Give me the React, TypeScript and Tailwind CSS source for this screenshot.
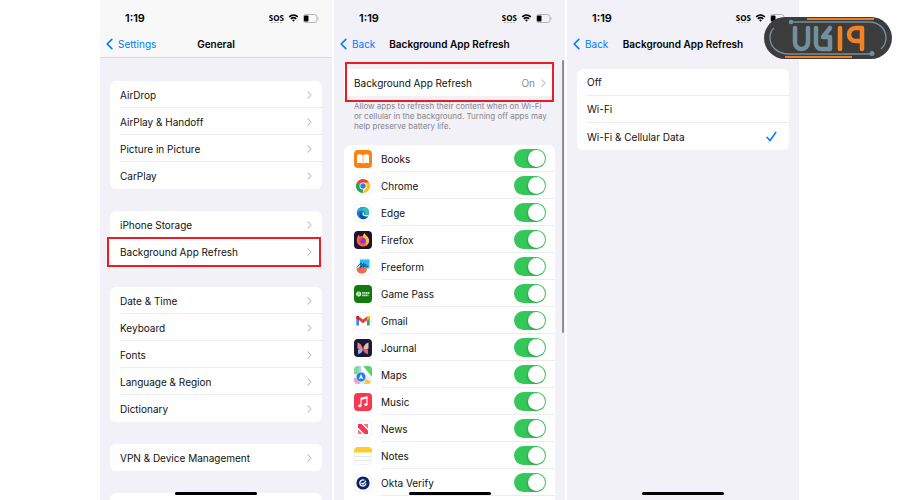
import type { ReactNode } from "react";

function Chevron({ className }: { className: string }) {
  return (
    <svg viewBox="0 0 6 10" className={className} fill="none" stroke="currentColor" strokeLinecap="round" strokeLinejoin="round" aria-hidden="true">
      <path d="M1 1l4 4-4 4" />
    </svg>
  );
}

function StatusBar() {
  return (
    <div className="flex h-9 shrink-0 items-center pl-[25px] pr-[13px]">
      <span className="text-[11px] font-semibold leading-4">1:19</span>
      <div className="ml-auto flex items-center gap-1">
        <div className="flex flex-col items-center">
          <span className="text-[8px] font-bold leading-[9px] font-['Open_Sans',sans-serif]">SOS</span>
          <svg viewBox="0 0 13 2" className="h-[2px] w-[13px]" fill="#b5b5b8" aria-hidden="true">
            <rect x="1" width="2" height="1" />
            <rect x="4" width="2" height="1" />
            <rect x="7" width="2" height="1" />
            <rect x="10" width="2" height="1" />
          </svg>
        </div>
        <svg viewBox="0 0 12 9" className="h-[8px] w-[11px]" fill="none" stroke="#000" strokeWidth="1.9" aria-hidden="true">
          <path d="M1.2 3.3C4 .7 8 .7 10.8 3.3" />
          <path d="M3 5.4c1.8-1.6 4.2-1.6 6 0" />
          <path d="M4.4 6.8L6 8.6l1.6-1.8c-1-.8-2.200-.8-3.200 0z" fill="#000" stroke="none" />
        </svg>
        <svg viewBox="0 0 16 9" className="h-[9px] w-4" fill="none" aria-hidden="true">
          <rect x=".5" y=".5" width="13.500" height="8" rx="2.300" stroke="#b4b4b8" />
          <rect x="1" y="1.500" width="4.500" height="6" rx="1" fill="#000" />
          <path d="M14.800 3v3c1-.5 1-2.500 0-3z" fill="#a9a9ad" />
        </svg>
      </div>
    </div>
  );
}

function NavBar({ back, title }: { back: string; title: string }) {
  return (
    <div className="grid h-4 shrink-0 grid-cols-[1fr_auto_1fr] items-center px-[6px] text-[10px] leading-4">
      <button type="button" className="flex items-center gap-[5px] text-[#007aff]">
        <Chevron className="h-3 w-[7px] rotate-180 stroke-[1.400]" />
        {back}
      </button>
      <h1 className="whitespace-nowrap font-semibold">{title}</h1>
    </div>
  );
}

function Phone({ children }: { children: ReactNode }) {
  return (
    <section className="relative flex min-w-0 flex-col overflow-hidden bg-[#f2f1f7]">
      {children}
      <div className="absolute inset-x-0 bottom-[5px] mx-auto h-[3px] w-[82px] rounded-full bg-black" />
    </section>
  );
}

function Card({ children }: { children: ReactNode }) {
  return <ul className="rounded-[6px] bg-white">{children}</ul>;
}

const divider = "border-b border-[#ececef]";

function LinkRow({ label, last, marked }: { label: string; last: boolean; marked?: boolean }) {
  return (
    <li className="relative pl-[10px]">
      <button type="button" className={`flex h-[27px] w-full items-center justify-between pt-px pr-[10px] text-left ${last ? "" : divider}`}>
        {label}
        <Chevron className="h-2 w-[5px] stroke-[1.300] text-[#bcbcc0]" />
      </button>
      {marked && <div className="pointer-events-none absolute -top-[1px] -bottom-[2px] -left-[3px] right-[1px] border-2 border-[#ed1c24]" />}
    </li>
  );
}

const groups = [
  ["AirDrop", "AirPlay & Handoff", "Picture in Picture", "CarPlay"],
  ["iPhone Storage", "Background App Refresh"],
  ["Date & Time", "Keyboard", "Fonts", "Language & Region", "Dictionary"],
  ["VPN & Device Management"],
];

const frame = <rect x=".5" y=".5" width="17" height="17" rx="4" fill="#fff" stroke="#f1f1f3" />;

const apps: { name: string; icon: ReactNode }[] = [
  {
    name: "Books",
    icon: (
      <>
        <rect width="18" height="18" rx="4" fill="#fb8112" />
        <path d="M3 5c2-1 4-1 5.700.2V13.500C7 12.600 5 12.600 3 13.300zM15 5c-2-1-4-1-5.700.2V13.500c1.700-.9 3.700-.9 5.700-.2z" fill="#fff" />
      </>
    ),
  },
  {
    name: "Chrome",
    icon: (
      <>
        {frame}
        <path d="M9 9L2.900 5.500A7 7 0 0 1 15.100 5.500z" fill="#ea4335" />
        <path d="M9 9L2.900 5.500A7 7 0 0 0 9 16z" fill="#23a455" />
        <path d="M9 9h3l-3 7A7 7 0 0 0 15.100 5.500H9z" fill="#fbc116" />
        <path d="M2.900 5.500L6 10.800l3 .2 1-2z" fill="#23a455" />
        <circle cx="9" cy="9" r="3.500" fill="#fff" />
        <circle cx="9" cy="9" r="2.700" fill="#2f7bea" />
      </>
    ),
  },
  {
    name: "Edge",
    icon: (
      <>
        {frame}
        <circle cx="9" cy="9" r="6.200" fill="#1377c9" />
        <path d="M2.900 8.500C3.500 1 14.600 1.200 15.200 8c0 2.300-2 3.300-5 2.800 1.200-1.300.8-3.800-1.800-4C5.500 6.600 3.600 7.200 2.900 8.500z" fill="#36bfae" />
        <path d="M2.900 8.500C4 3.800 8 2.200 11 3.400 8 4 8.600 6.600 8.400 6.800 5.500 6.600 3.600 7.200 2.900 8.500z" fill="#28a7dc" />
        <path d="M7.600 8c-1.500 3 1.500 5.500 6.300 4.300-1.300 2.200-3.400 3-5.300 2.900-3.100-1.600-3.500-5.400-1-7.200z" fill="#0e4f9e" />
        <path d="M9.200 8c1 1 .5 2 .9 2.700 1.700 1 3.800.7 5-.6-.3 1-.7 1.700-1.200 2.200-4 .8-6.600-1.600-4.700-4.300z" fill="#fff" />
      </>
    ),
  },
  {
    name: "Firefox",
    icon: (
      <>
        <rect width="18" height="18" rx="4" fill="#1f1238" />
        <path d="M3.600 5.500l.7-2 1.500 2C7 4.800 8 4.800 9 5c0-1.200.6-2.200 1.500-2.800.5 2 4.500 3.300 4.500 7.300 0 3.600-2.700 6-6 6s-6.200-2.500-6.200-6c0-1.600.2-3 .8-4z" fill="#ff6a2b" />
        <path d="M10.500 2.200c.5 2 4.500 3.300 4.500 7.300 0 2.500-1.300 4.300-3.200 5.300C13 12 13 8 9.300 6.500 9 4.500 9.600 3 10.500 2.200z" fill="#ffc72c" />
        <circle cx="8.800" cy="9.700" r="2.900" fill="#8338d8" />
        <path d="M4.600 8c1.500-1 3-.4 4.200.3-1 1-2.300.8-2.600 2C6 12.600 9 13.500 11.300 11.500 10 15 4.700 14 4.600 8z" fill="#ff4056" />
      </>
    ),
  },
  {
    name: "Freeform",
    icon: (
      <>
        {frame}
        <rect x="6" y="1.500" width="9.500" height="9" fill="#21c0ee" />
        <path d="M2.500 10.500c2-1.500 9-1.500 10.500 0 0 3-2.300 5-5.300 5s-5.200-2-5.200-5z" fill="#f2694b" />
        <path d="M3 9.500C5 7 7 4 7.300 5c.4 1.200-2.300 5.200-1.300 5.200S9 5 9.800 5.300c.7.400-1.400 4-.6 4.200s1.800-3.700 2.600-3.300c.6.500-.3 2.500.4 2.800.6.100 1-.5 1.800-1" fill="none" stroke="#16457c" strokeWidth="1" />
      </>
    ),
  },
  {
    name: "Game Pass",
    icon: (
      <>
        <rect width="18" height="18" rx="4" fill="#107c10" />
        <circle cx="4.700" cy="9" r="2.500" fill="#fff" />
        <path d="M3.200 10.700L4.700 8.500l1.500 2.200M3.500 7.200l1.200.8 1.200-.8" stroke="#107c10" strokeWidth=".6" fill="none" />
        <path d="M8.200 7.800h7.400M8.200 10.400h6.200" stroke="#d8ead8" strokeWidth="1.800" strokeDasharray="1.500 .4" />
      </>
    ),
  },
  {
    name: "Gmail",
    icon: (
      <>
        {frame}
        <path d="M2.300 5.500v8h2.700V7.500z" fill="#4285f4" />
        <path d="M15.700 5.500v8H13V7.500z" fill="#34a853" />
        <path d="M2.300 5.300C2.300 4 4 3.700 5 4.500l4 3 4-3c1-.8 2.700-.5 2.700.8v1L9 11.300 2.300 6.300z" fill="#ea4335" />
        <path d="M13 4.500c1-.8 2.700-.5 2.700.8v1.200L13 8.500z" fill="#fbbc04" />
        <path d="M2.300 5.300C2.300 4 4 3.700 5 4.500v4L2.300 6.500z" fill="#c5221f" />
      </>
    ),
  },
  {
    name: "Journal",
    icon: (
      <>
        <rect width="18" height="18" rx="4" fill="#191a38" />
        <path d="M8.800 9.500C8 6 6 4 3.500 3.500v6c1 .3 2 .8 2.700 1.300z" fill="#ee7f7b" />
        <path d="M8.800 9.500L4 10.500v4.500c2.500-.2 4.200-1.500 4.800-4z" fill="#8fb4ea" />
        <path d="M9.200 9.500C10 6 12 4 14.500 3.500v6c-1 .3-2 .8-2.700 1.300z" fill="#f3b9a4" />
        <path d="M9.200 9.500L14 10.500v4.500c-2.500-.2-4.200-1.500-4.800-4z" fill="#d5627f" />
      </>
    ),
  },
  {
    name: "Maps",
    icon: (
      <>
        <rect width="18" height="18" rx="4" fill="#e9edf0" />
        <path d="M4 0h3v8H0V4a4 4 0 0 1 4-4z" fill="#7fdc8c" />
        <path d="M9 0h5a4 4 0 0 1 4 4v8z" fill="#55d46c" />
        <path d="M7 0h2l9 11v3L6 2z" fill="#fff" />
        <path d="M10 18l2-5 5 3a4 4 0 0 1-3 2z" fill="#fcc62f" />
        <path d="M0 12h4l2 6H4a4 4 0 0 1-4-4z" fill="#ee9fc4" />
        <path d="M4.500 0H7v6H4.500z" fill="#a9cdf5" />
        <circle cx="7" cy="11" r="4.900" fill="#1d7df2" stroke="#fff" strokeWidth=".6" />
        <path d="M7 8l2.300 5.300L7 12.300l-2.300 1z" fill="#fff" />
      </>
    ),
  },
  {
    name: "Music",
    icon: (
      <>
        <rect width="18" height="18" rx="4" fill="#fa3650" />
        <path d="M7 12.700V5.300l6-1.400v7.500" fill="none" stroke="#fff" strokeWidth="1.100" />
        <path d="M7 5l6-1.400v1.900L7 6.900z" fill="#fff" />
        <ellipse cx="5.800" cy="12.900" rx="1.700" ry="1.400" fill="#fff" />
        <ellipse cx="11.800" cy="11.600" rx="1.700" ry="1.400" fill="#fff" />
      </>
    ),
  },
  {
    name: "News",
    icon: (
      <>
        {frame}
        <path d="M4 4h3.500L14 10.500V14h-3.500L4 7.500z" fill="#fa3552" />
        <path d="M9.500 4H14v4.500zM4 9.500L8.500 14H4z" fill="#fb7186" />
      </>
    ),
  },
  {
    name: "Notes",
    icon: (
      <>
        {frame}
        <path d="M0 5.500V4a4 4 0 0 1 4-4h10a4 4 0 0 1 4 4v1.500z" fill="#fccd2c" />
        <path d="M1 9.500h16M1 13.500h16" stroke="#e0e0e2" strokeWidth=".8" />
      </>
    ),
  },
  {
    name: "Okta Verify",
    icon: (
      <>
        {frame}
        <circle cx="9" cy="9" r="6.600" fill="#0b2268" />
        <path d="M12 9.300a3.100 3.100 0 1 1-1.500-3" fill="none" stroke="#fff" strokeWidth="1.300" />
        <path d="M7.500 8.800l1.500 1.400 3-3.400" fill="none" stroke="#fff" strokeWidth="1.200" />
      </>
    ),
  },
];

function Toggle({ id }: { id: string }) {
  return (
    <span className="relative flex h-[19px] w-8 shrink-0">
      <input id={id} type="checkbox" role="switch" defaultChecked className="peer h-[19px] w-8 appearance-none rounded-full bg-[#34c759]" />
      <span className="pointer-events-none absolute top-[1px] right-[1px] h-[17px] w-[17px] rounded-full bg-white shadow-[-1px_1px_2px_rgba(0,0,0,0.18)]" />
    </span>
  );
}

function Logo() {
  return (
    <svg viewBox="0 0 128 42" className="absolute top-[17px] right-[8px] h-[42px] w-32" fill="none" role="img" aria-label="UR19">
      <rect width="128" height="42" rx="21" fill="#3c3c3d" />
      <path d="M43 2h67M21 40h67" stroke="#f07d22" strokeWidth="2" />
      <g stroke="#71909c" strokeWidth="1.400">
        <path d="M27 5h78c10 0 17 7 17 16 0 4-1.500 8-5 11" />
        <path d="M108 37H25C14 37 6 30 6 21c0-4 1.500-8 4-10" />
      </g>
      <circle cx="27" cy="5" r="2.300" fill="#71909c" />
      <circle cx="108" cy="36.500" r="2.500" fill="#71909c" />
      <g stroke="#71909c" strokeWidth="4.500" strokeLinecap="round" strokeLinejoin="round">
        <path d="M31 11v14.500a6.500 6.500 0 0 0 13 0V11" />
        <path d="M52 11v15.500a5.500 5.500 0 0 0 5.500 5.500H66V20h-7l7-9" />
      </g>
      <g stroke="#f58220" strokeWidth="4.500" strokeLinecap="round" strokeLinejoin="round">
        <path d="M76 11v21" />
        <path d="M98 32V11h-6.500a6.500 6.500 0 0 0 0 13H98" />
      </g>
    </svg>
  );
}

export default function App() {
  return (
    <main className="relative grid h-screen grid-cols-[232fr_231fr_232fr] gap-x-0.5 overflow-hidden bg-white pl-[100px] pr-[101px] font-['Inter','Liberation_Sans',sans-serif] text-[10px] leading-4 text-[#111]">
      <Phone>
        <header className="h-[58px] shrink-0 border-b border-[#dcdce0] bg-[#f8f8f9] text-black">
          <StatusBar />
          <NavBar back="Settings" title="General" />
        </header>
        <div className="flex flex-col gap-[22px] px-[10px] pt-[23px]">
          {groups.map((group) => (
            <Card key={group[0]}>
              {group.map((label, i) => (
                <LinkRow key={label} label={label} last={i === group.length - 1} marked={label === "Background App Refresh"} />
              ))}
            </Card>
          ))}
          <div className="h-[27px] rounded-[6px] bg-white" />
        </div>
      </Phone>

      <Phone>
        <header className="shrink-0 text-black">
          <StatusBar />
          <NavBar back="Back" title="Background App Refresh" />
        </header>
        <div className="px-[10px] pt-[17px]">
          <div className="relative bg-white">
            <button type="button" className="flex h-[27px] w-full items-center pl-[10px] pr-[9px] text-left">
              Background App Refresh
              <span className="ml-auto mr-[6px] text-[#8a8a8e]">On</span>
              <Chevron className="h-2 w-[5px] stroke-[1.300] text-[#bcbcc0]" />
            </button>
            <div className="pointer-events-none absolute -top-[7px] -bottom-[6px] left-[1px] right-[1px] border-2 border-[#ed1c24]" />
          </div>
          <p className="whitespace-nowrap pt-[5px] pl-[10px] text-[8px] leading-[10px] text-[#86868b]">
            Allow apps to refresh their content when on Wi-Fi
            <br />
            or cellular in the background. Turning off apps may
            <br />
            help preserve battery life.
          </p>
          <div className="pt-[14px]">
            <Card>
              {apps.map(({ name, icon }) => (
                <li key={name} className="flex h-[27px] items-center gap-[9px] pl-[10px]">
                  <svg viewBox="0 0 18 18" className="h-[18px] w-[18px] shrink-0" aria-hidden="true">
                    {icon}
                  </svg>
                  <div className={`flex h-[27px] grow items-center justify-between pt-px pr-[9px] ${divider}`}>
                    <label htmlFor={name}>{name}</label>
                    <Toggle id={name} />
                  </div>
                </li>
              ))}
              <li className="h-[27px]" />
            </Card>
          </div>
        </div>
        <div className="absolute top-[60px] right-[1px] h-[273px] w-[2px] rounded-full bg-[#8e8e92]" />
      </Phone>

      <Phone>
        <header className="shrink-0 text-black">
          <StatusBar />
          <NavBar back="Back" title="Background App Refresh" />
        </header>
        <div className="px-[10px] pt-[17px]">
          <Card>
            {["Off", "Wi-Fi", "Wi-Fi & Cellular Data"].map((label, i) => (
              <li key={label} className="pl-[10px]">
                <label className={`relative flex h-[27px] items-center justify-between pr-3 ${i < 2 ? divider : ""}`}>
                  {label}
                  <input type="radio" name="refresh" defaultChecked={i === 2} className="peer sr-only" />
                  <svg viewBox="0 0 11 11" className="hidden h-[11px] w-[11px] peer-checked:block" fill="none" stroke="#007aff" strokeWidth="1.500" strokeLinecap="round" strokeLinejoin="round" aria-hidden="true">
                    <path d="M1 6.200l3 3.500L9.800 1.300" />
                  </svg>
                </label>
              </li>
            ))}
          </Card>
        </div>
      </Phone>
      <Logo />
    </main>
  );
}
